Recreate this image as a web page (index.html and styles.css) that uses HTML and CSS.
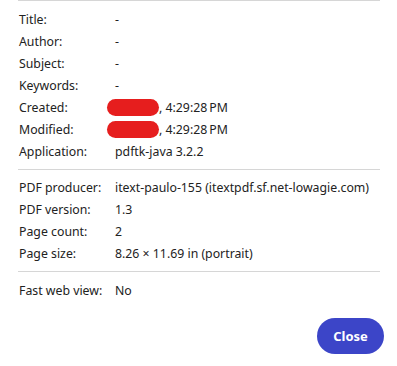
FILE: index.html
```html
<!DOCTYPE html>
<html lang="en">
<head>
<meta charset="utf-8">
<title>Document properties</title>
<link rel="stylesheet" href="styles.css">
</head>
<body>
<div class="dialog">
  <div class="section first">
    <div class="row"><span class="label">Title:</span><span class="value">-</span></div>
    <div class="row"><span class="label">Author:</span><span class="value">-</span></div>
    <div class="row"><span class="label">Subject:</span><span class="value">-</span></div>
    <div class="row"><span class="label">Keywords:</span><span class="value">-</span></div>
    <div class="row"><span class="label">Created:</span><span class="value"><span class="redact"></span>, 4:29:28&#8239;PM</span></div>
    <div class="row"><span class="label">Modified:</span><span class="value"><span class="redact"></span>, 4:29:28&#8239;PM</span></div>
    <div class="row"><span class="label">Application:</span><span class="value">pdftk-java 3.2.2</span></div>
  </div>
  <div class="section">
    <div class="row"><span class="label">PDF producer:</span><span class="value">itext-paulo-155 (itextpdf.sf.net-lowagie.com)</span></div>
    <div class="row"><span class="label">PDF version:</span><span class="value">1.3</span></div>
    <div class="row"><span class="label">Page count:</span><span class="value">2</span></div>
    <div class="row"><span class="label">Page size:</span><span class="value">8.26 × 11.69 in (portrait)</span></div>
  </div>
  <div class="section last">
    <div class="row"><span class="label">Fast web view:</span><span class="value">No</span></div>
  </div>
  <div class="actions">
    <button class="close">Close</button>
  </div>
</div>
</body>
</html>
```

FILE: styles.css
```css
html, body {
  margin: 0;
  padding: 0;
  background: #ffffff;
}
body {
  font-family: "Noto Sans", "Open Sans", sans-serif;
  font-size: 12.3px;
  color: #222222;
}
.dialog {
  width: 362px;
  margin-left: 18px;
}
.section {
  border-top: 1px solid #d6d6d6;
  padding: 6px 0 7px 0;
}
.section.first {
  padding-top: 7px;
}
.section.last {
  padding-top: 7px;
  padding-bottom: 0;
}
.row {
  display: grid;
  grid-template-columns: 97px 1fr;
  height: 22px;
  align-items: center;
  white-space: nowrap;
}
.label {
  padding-left: 1px;
}
.redact {
  display: inline-block;
  width: 52px;
  height: 17px;
  border-radius: 9px;
  background: #e61e1e;
  margin-left: -8px;
  vertical-align: -4px;
}
.actions {
  display: flex;
  justify-content: flex-end;
  padding-top: 17px;
  margin-right: -4px;
}
.close {
  width: 67px;
  height: 36px;
  border: none;
  border-radius: 18px;
  background: #3c45c8;
  color: #ffffff;
  font-family: "Noto Sans", "Open Sans", sans-serif;
  font-weight: 700;
  font-size: 13px;
  padding: 0;
}
```
